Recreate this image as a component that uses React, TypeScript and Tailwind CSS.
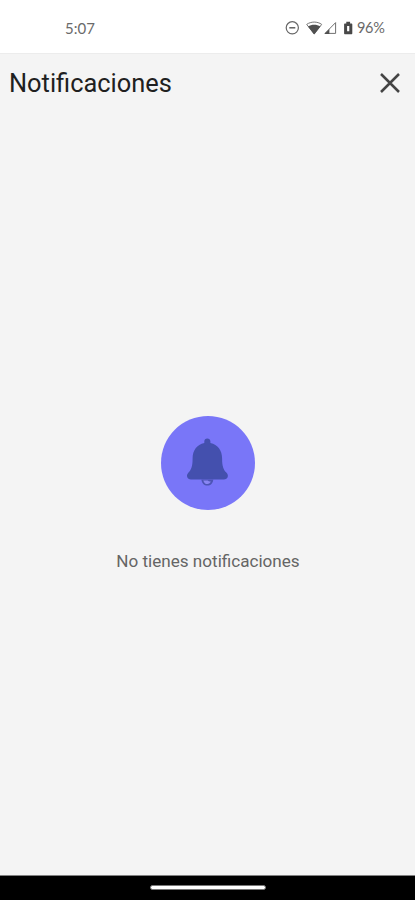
function StatusBar() {
  return (
    <div className="flex h-[53px] items-start bg-white pl-[65px] pt-[18px] font-['Lato',sans-serif] text-[15px] leading-5 text-[#6a6a6a]">
      <span className="w-[220px]">5:07</span>
      <svg className="mt-[2px] h-4 w-[70px]" viewBox="0 0 70 16" fill="none">
        <circle cx="7.3" cy="7.8" r="6.1" stroke="#666" strokeWidth="1.2" />
        <path d="M4.3 7.8h6" stroke="#555" strokeWidth="1.4" />
        <path d="M21.7 4.4c4.3-3.1 10.7-3.1 15 0L29.2 14z" fill="#fff" stroke="#777" strokeWidth="1" />
        <path d="M23 6.5c3.6-2.5 8.8-2.5 12.4 0l-6.2 7.9z" fill="#505050" />
        <path d="M40 13.4L50.6 2.6v10.8z" stroke="#707070" strokeWidth="1" />
        <path d="M39.4 14l5-5.1V14z" fill="#505050" />
        <path fillRule="evenodd" d="M61.3 1.8h3.8v1.6h1.2c.6 0 1 .4 1 1v8.8c0 .6-.4 1-1 1h-6.2c-.6 0-1-.4-1-1V4.4c0-.6.4-1 1-1h1.2zM62.1 6v5.3h2.2V6z" fill="#484848" />
      </svg>
      <span className="ml-[2px] text-[14.5px] tracking-[-0.3px]">96%</span>
    </div>
  );
}

function BellBadge() {
  return (
    <div className="h-[94px] w-[94px] rounded-full bg-[#7976f8]">
      <svg className="h-full w-full" viewBox="0 0 94 94" fill="none">
        <path d="M46.3 22.6c-1.8 0-3 1.2-3 2.9v1.4c-7.4 1.5-11.7 7.6-11.7 15.3 0 8.4-1.3 11-4.1 14.4-1.4 1.6-1.8 3-1.3 4.4.5 1.6 1.7 2.5 3.8 2.5h32.8c2.1 0 3.4-.9 3.9-2.5.5-1.4 0-2.9-1.4-4.4-2.9-3.4-4.2-6-4.2-14.4 0-7.7-4.3-13.8-11.7-15.3v-1.4c0-1.7-1.3-2.9-3.1-2.9z" fill="#4450ae" />
        <path d="M40.4 63.4h11.9c-.3 3.5-2.7 6.2-5.9 6.2s-5.7-2.7-6-6.2z" fill="#4d54b6" />
        <path d="M42.3 64.4c.7 2.3 2 3.6 4.1 3.7 1.7-.3 2.8-1.2 3.4-2.7-1.4.2-2.2-.1-3-.9z" fill="#8986f4" />
      </svg>
    </div>
  );
}

export default function App() {
  return (
    <div className="flex h-[900px] w-full flex-col overflow-hidden bg-[#f4f4f4] font-['Roboto',sans-serif]">
      <StatusBar />
      <header className="flex h-[60px] items-center justify-between border-t border-[#ececec] pl-[9px] pr-[15px]">
        <h1 className="mb-[2px] text-[25.4px] leading-8 text-[#202020]">Notificaciones</h1>
        <svg className="mb-[2px] h-5 w-5" viewBox="0 0 20 20" fill="none" stroke="#444" strokeWidth="2.5">
          <path d="M1 1l18 18M19 1L1 19" />
        </svg>
      </header>
      <main className="flex flex-1 flex-col items-center pl-px pt-[303px]">
        <BellBadge />
        <p className="mt-[39px] text-[17.1px] leading-6 text-[#656565]">No tienes notificaciones</p>
      </main>
      <footer className="flex h-[25px] justify-center border-t border-[#808080] bg-black pt-[9px]">
        <div className="h-[5px] w-[116px] rounded-full border border-[#777] bg-white" />
      </footer>
    </div>
  );
}
